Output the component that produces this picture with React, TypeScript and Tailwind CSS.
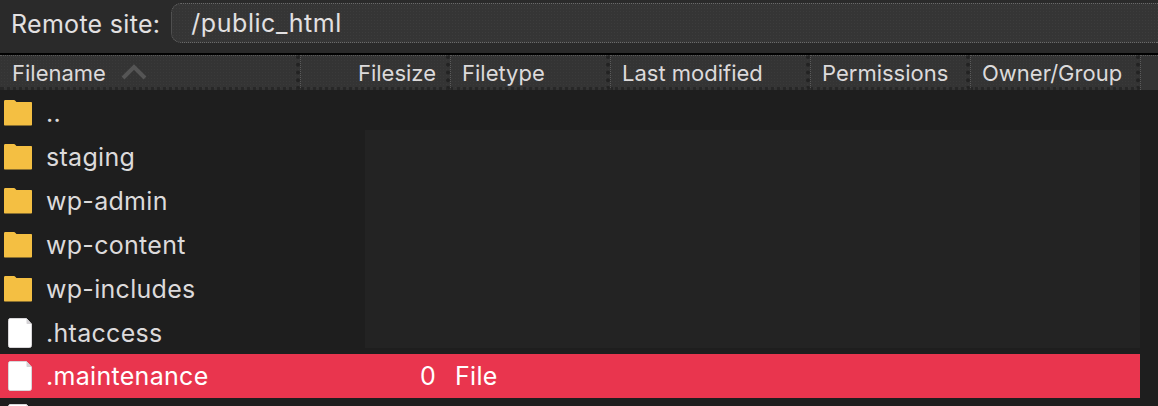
const columns = [
  { label: 'Filesize', width: 'w-[150px]', align: 'justify-end pr-[10px]' },
  { label: 'Filetype', width: 'w-[160px]', align: 'pl-[11px]' },
  { label: 'Last modified', width: 'w-[200px]', align: 'pl-[11px]' },
  { label: 'Permissions', width: 'w-[160px]', align: 'pl-[11px]' },
  { label: 'Owner/Group', width: 'w-[170px]', align: 'pl-[11px]' },
]

const folders = ['..', 'staging', 'wp-admin', 'wp-content', 'wp-includes']

function FolderIcon() {
  return (
    <svg width="28" height="26" viewBox="0 0 28 26" className="shrink-0">
      <path
        d="M0 1.500C0 .6.5 0 1.200 0h8.600c.8 0 1.200.4 1.700 1 .4.5.8 1 1.500 1h14c.6 0 1 .4 1 1v21.500c0 .6-.4 1-1 1H1c-.6 0-1-.4-1-1Z"
        fill="#f4bf42"
      />
    </svg>
  )
}

function FileIcon() {
  return (
    <svg width="26" height="30" viewBox="0 0 26 30" className="shrink-0">
      <path
        d="M3 .5h16.500l5 5.500v21.500c0 1.200-.8 2-1.800 2H3c-1 0-1.500-.8-1.500-2v-25C1.500 1.300 2 .5 3 .5Z"
        fill="#ffffff"
        stroke="#d8d6d9"
        strokeWidth="1"
      />
      <path d="M19.500 .5l5 5.500h-4c-.6 0-1-.4-1-1Z" fill="#d5d3d6" />
    </svg>
  )
}

function HeaderCell({ label, width, align }: { label: string; width: string; align: string }) {
  return (
    <div
      className={`${width} ${align} flex h-full shrink-0 items-center border-t border-l border-dotted border-[#5a5a5a] border-r-[4px] border-r-[#232323] border-b-[3px] border-b-[#272727] bg-[#343434] bg-[radial-gradient(#3a3a3a_1px,transparent_1px)] bg-[length:3px_3px] pt-[4px] text-[22px] text-[#dcdadb]`}
    >
      {label}
    </div>
  )
}

export default function App() {
  return (
    <div className="h-[406px] w-[1158px] overflow-hidden bg-[#1e1e1e] font-['Inter','Liberation_Sans',sans-serif]">
      {/* Remote site bar */}
      <div className="flex h-[53px] items-center bg-[#2a2a2a] pb-[9px] pl-[11px] pt-[2px]">
        <span className="pt-[3px] text-[25px] tracking-[0.3px] text-[#e2e0e1]">Remote site:</span>
        <div className="ml-[11px] flex h-[40px] flex-1 items-center rounded-l-[10px] border border-r-0 border-dotted border-[#6a6a6a] bg-[#353535] bg-[radial-gradient(#3c3c3c_1px,transparent_1px)] bg-[length:3px_3px] pl-[19px] pt-[2px] text-[25px] tracking-[0.55px] text-[#e2e0e1]">
          /public_html
        </div>
      </div>
      <div className="h-[2px] bg-black" />

      {/* Column headers */}
      <div className="flex h-[35px] bg-[#2a2a2a]">
        <div className="flex h-full w-[300px] shrink-0 items-center border-t border-dotted border-[#5a5a5a] border-r-[4px] border-r-[#232323] border-b-[3px] border-b-[#272727] bg-[#343434] bg-[radial-gradient(#3a3a3a_1px,transparent_1px)] bg-[length:3px_3px] pl-[12px] pt-[4px] text-[22px] text-[#dcdadb]">
          Filename
          <svg width="26" height="16" viewBox="0 0 26 16" className="mb-[4px] ml-[15px]">
            <path d="M2 14 13 3l11 11" fill="none" stroke="#555555" strokeWidth="4" />
          </svg>
        </div>
        <div className="flex h-full w-[840px]">
          {columns.map(c => (
            <HeaderCell key={c.label} {...c} />
          ))}
        </div>
        <div className="flex-1 border-t border-l border-dotted border-[#5a5a5a] bg-[#343434]" />
      </div>

      {/* File rows */}
      <div className="flex">
        <div className="w-[365px] shrink-0 pt-[1px]">
          {folders.map(name => (
            <div key={name} className="flex h-[44px] items-center pl-[4px] text-[25px] tracking-[0.3px] text-[#dcdadb]">
              <FolderIcon />
              <span className="ml-[14px] pt-[2px]">{name}</span>
            </div>
          ))}
          <div className="flex h-[44px] items-center pl-[7px] text-[25px] tracking-[0.3px] text-[#dcdadb]">
            <FileIcon />
            <span className="ml-[13px] pt-[2px]">.htaccess</span>
          </div>
        </div>
        <div className="w-[775px] pt-[40px]">
          <div className="h-[218px] bg-[#232323]" />
        </div>
      </div>

      {/* Selected row */}
      <div className="mt-[-1px] flex h-[44px] w-[1140px] items-center bg-[#e9354e] pl-[7px] text-[25px] tracking-[0.3px] text-white">
        <FileIcon />
        <span className="ml-[13px] w-[360px] pt-[2px]">.maintenance</span>
        <span className="w-[30px] pt-[2px] text-right">0</span>
        <span className="ml-[19px] pt-[2px]">File</span>
      </div>

      <div className="pl-[7px] pt-[6px]">
        <FileIcon />
      </div>
    </div>
  )
}
